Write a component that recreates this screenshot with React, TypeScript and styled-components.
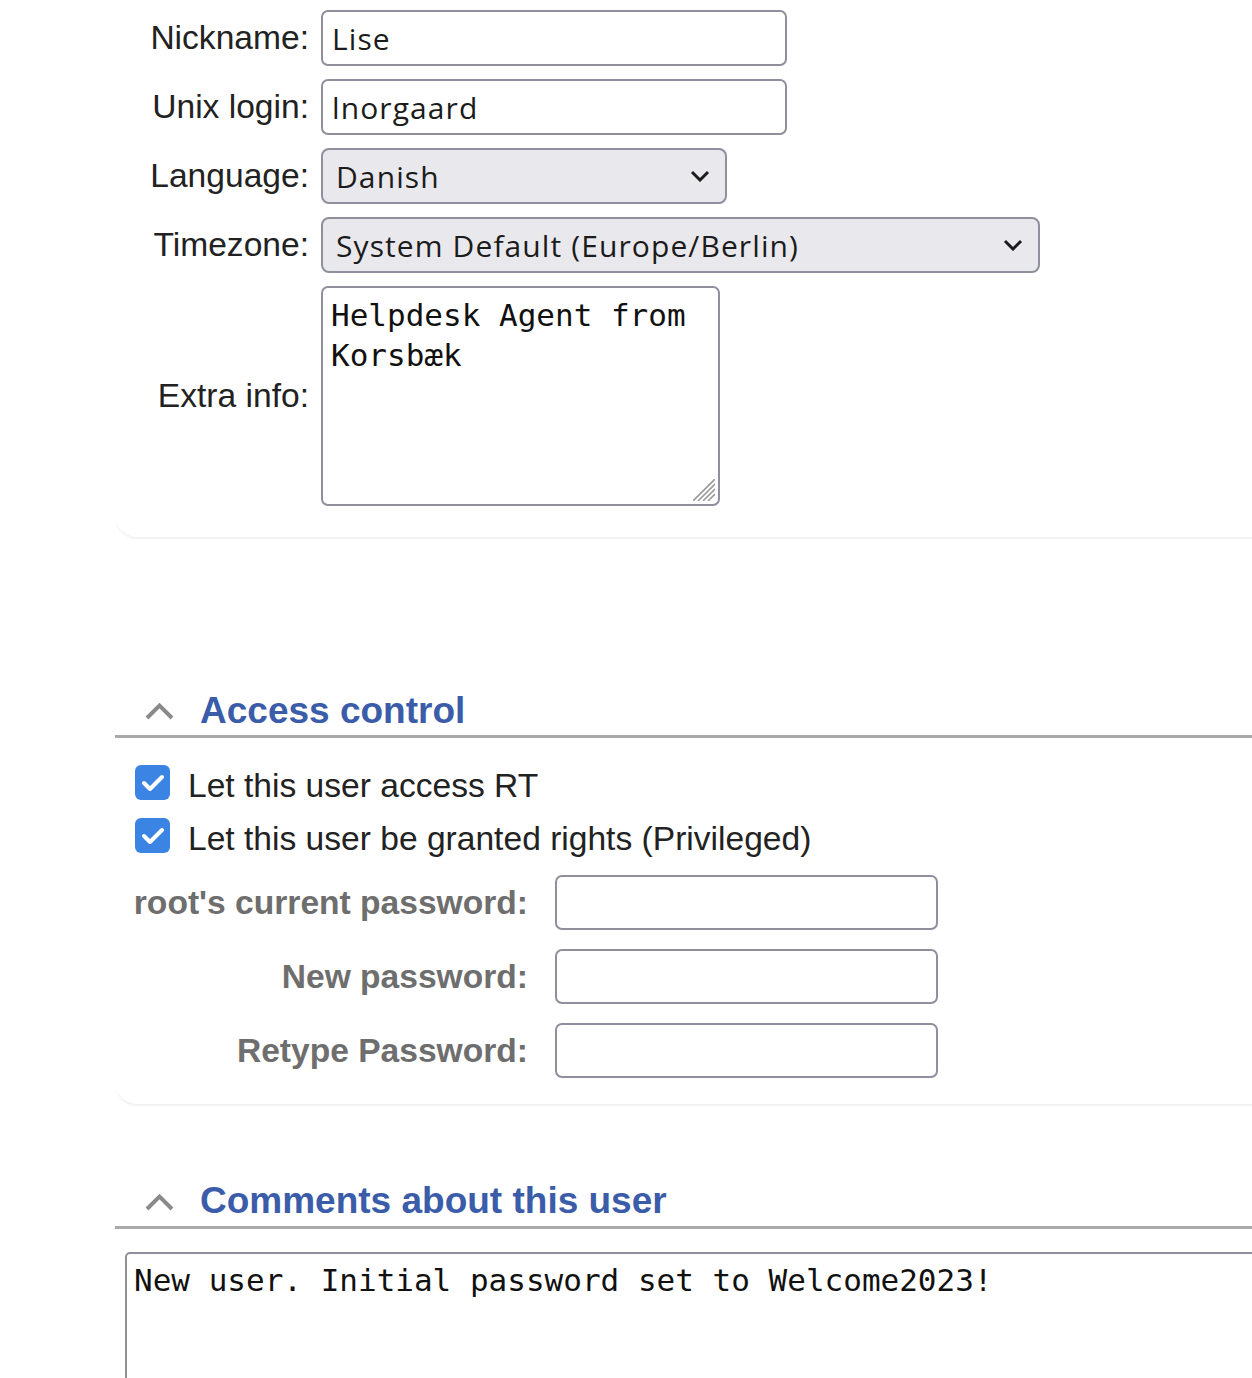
import React from 'react'
import styled, { createGlobalStyle } from 'styled-components'

const GlobalStyle = createGlobalStyle`
  html, body {
    margin: 0;
    padding: 0;
    background: #ffffff;
    overflow: hidden;
  }
  body {
    font-family: "Liberation Sans", Arial, sans-serif;
    color: #1e1e1e;
  }
`

const Page = styled.div`
  width: 1252px;
  box-sizing: border-box;
  padding-left: 115px;
`

const Card = styled.section<{ $gap: number; $bottom: number }>`
  background: #ffffff;
  margin-top: ${p => p.$gap}px;
  margin-right: -60px;
  padding-bottom: ${p => p.$bottom}px;
  border-radius: 0 0 0 22px;
  box-shadow: 0 3px 2px -1px rgba(0, 0, 0, 0.06);
`

const FormGrid = styled.div<{ $labelWidth: number; $gap: number; $rowGap: number }>`
  display: grid;
  grid-template-columns: ${p => p.$labelWidth}px auto;
  column-gap: ${p => p.$gap}px;
  row-gap: ${p => p.$rowGap}px;
  align-items: center;
  justify-items: start;
`

const Label = styled.label<{ $muted?: boolean }>`
  justify-self: end;
  font-size: 33.6px;
  line-height: 1.2;
  white-space: nowrap;
  color: ${p => (p.$muted ? '#6e6e6e' : '#222222')};
  font-weight: ${p => (p.$muted ? 700 : 400)};
`

const TextInput = styled.input<{ $width: number; $height?: number }>`
  box-sizing: border-box;
  width: ${p => p.$width}px;
  height: ${p => p.$height ?? 56}px;
  margin: 0;
  padding: 0 9px;
  border: 2px solid #8f8f9d;
  border-radius: 7px;
  background: #ffffff;
  font-family: "Open Sans", "Noto Sans", sans-serif;
  font-size: 30px;
  letter-spacing: 1.1px;
  color: #1b1b1b;
  outline: none;
`

const SelectWrap = styled.div`
  position: relative;
  display: inline-flex;
`

const Select = styled.select<{ $width: number }>`
  box-sizing: border-box;
  width: ${p => p.$width}px;
  height: 56px;
  margin: 0;
  padding: 0 60px 0 13px;
  border: 2px solid #8f8f9d;
  border-radius: 8px;
  background: #e9e9ed;
  font-family: "Open Sans", "Noto Sans", sans-serif;
  font-size: 30px;
  letter-spacing: 1.1px;
  color: #1b1b1b;
  appearance: none;
  -webkit-appearance: none;
  outline: none;
`

const SelectArrow = styled.svg`
  position: absolute;
  right: 17px;
  top: 22px;
  pointer-events: none;
`

const TextAreaWrap = styled.div`
  position: relative;
  display: inline-flex;
`

const MonoArea = styled.textarea<{ $width: number; $height: number; $pad: string; $radius: number }>`
  box-sizing: border-box;
  width: ${p => p.$width}px;
  height: ${p => p.$height}px;
  margin: 0;
  padding: ${p => p.$pad};
  border: 2px solid #8f8f9d;
  border-radius: ${p => p.$radius}px;
  background: #ffffff;
  font-family: "DejaVu Sans Mono", monospace;
  font-size: 31px;
  line-height: 40px;
  color: #111111;
  resize: none;
  outline: none;
  overflow: hidden;
`

const Grip = styled.svg`
  position: absolute;
  right: 5px;
  bottom: 5px;
  pointer-events: none;
`

const SectionHead = styled.h2`
  display: flex;
  align-items: center;
  margin: 0;
  padding: 0 0 2px 30px;
  border-bottom: 3px solid #a9a9a9;
  font-size: 37px;
  line-height: 1.2;
  font-weight: 700;
  color: #3b5ca9;
`

const Chevron = styled.svg`
  margin-right: 26px;
  flex-shrink: 0;
`

const CheckList = styled.div`
  display: flex;
  flex-direction: column;
  gap: 13px;
  margin: 24.5px 0 19.5px 20px;
`

const CheckRow = styled.label`
  display: flex;
  align-items: center;
  gap: 18px;
  font-size: 33.6px;
  line-height: 40px;
  color: #222222;
`

const CheckText = styled.span`
  padding-top: 3px;
  margin-bottom: -3px;
`

const CheckBox = styled.span`
  width: 35px;
  height: 35px;
  border-radius: 6px;
  background: #3b84e4;
  display: inline-flex;
  align-items: center;
  justify-content: center;
  flex-shrink: 0;
`

const CommentBox = styled.div`
  margin: 23px 0 0 10px;
`

const ChevronUp = () => (
  <Chevron width="29" height="18" viewBox="0 0 29 18">
    <polyline points="2,16 14.5,3.5 27,16" fill="none" stroke="#8a8a8a" strokeWidth="4" />
  </Chevron>
)

const Check = ({ label }: { label: string }) => (
  <CheckRow>
    <CheckBox>
      <svg width="24" height="20" viewBox="0 0 24 20">
        <polyline points="3,10 9,16 21,4" fill="none" stroke="#ffffff" strokeWidth="4" strokeLinecap="round" strokeLinejoin="round" />
      </svg>
    </CheckBox>
    <CheckText>{label}</CheckText>
  </CheckRow>
)

const Dropdown = ({ width, value }: { width: number; value: string }) => (
  <SelectWrap>
    <Select $width={width} defaultValue={value}>
      <option>{value}</option>
    </Select>
    <SelectArrow width="20" height="12" viewBox="0 0 20 12">
      <polyline points="2,2 10,10 18,2" fill="none" stroke="#1b1b1b" strokeWidth="3" />
    </SelectArrow>
  </SelectWrap>
)

const ResizeGrip = () => (
  <Grip width="22" height="22" viewBox="0 0 22 22">
    {[0, 5, 10, 15].map(o => (
      <line key={o} x1={o} y1={22} x2={22} y2={o} stroke="#9a9a9a" strokeWidth="1.6" />
    ))}
  </Grip>
)

export default function App() {
  return (
    <Page>
      <GlobalStyle />
      <Card $gap={10} $bottom={31}>
        <FormGrid $labelWidth={194} $gap={12} $rowGap={13}>
          <Label>Nickname:</Label>
          <TextInput $width={466} defaultValue="Lise" />
          <Label>Unix login:</Label>
          <TextInput $width={466} defaultValue="lnorgaard" />
          <Label>Language:</Label>
          <Dropdown width={406} value="Danish" />
          <Label>Timezone:</Label>
          <Dropdown width={719} value="System Default (Europe/Berlin)" />
          <Label>Extra info:</Label>
          <TextAreaWrap>
            <MonoArea
              $width={399}
              $height={220}
              $pad="7px 8px"
              $radius={7}
              defaultValue={'Helpdesk Agent from Korsbæk'}
            />
            <ResizeGrip />
          </TextAreaWrap>
        </FormGrid>
      </Card>

      <Card $gap={152} $bottom={26}>
        <SectionHead>
          <ChevronUp />
          Access control
        </SectionHead>
        <CheckList>
          <Check label="Let this user access RT" />
          <Check label="Let this user be granted rights (Privileged)" />
        </CheckList>
        <FormGrid $labelWidth={413} $gap={27} $rowGap={19}>
          <Label $muted>root's current password:</Label>
          <TextInput $width={383} $height={55} type="password" />
          <Label $muted>New password:</Label>
          <TextInput $width={383} $height={55} type="password" />
          <Label $muted>Retype Password:</Label>
          <TextInput $width={383} $height={55} type="password" />
        </FormGrid>
      </Card>

      <Card $gap={75} $bottom={0}>
        <SectionHead>
          <ChevronUp />
          Comments about this user
        </SectionHead>
        <CommentBox>
          <MonoArea
            $width={1200}
            $height={220}
            $pad="6px 7px"
            $radius={5}
            defaultValue="New user. Initial password set to Welcome2023!"
          />
        </CommentBox>
      </Card>
    </Page>
  )
}
